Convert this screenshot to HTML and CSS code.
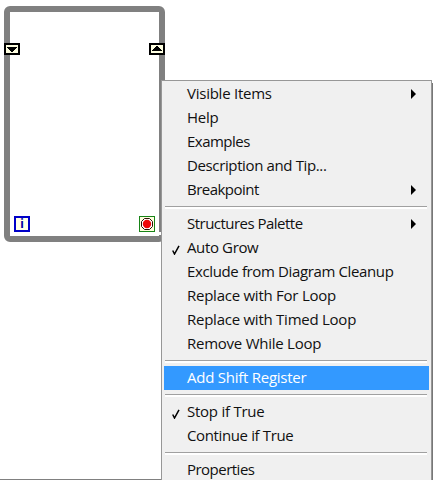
FILE: index.html
```html
<!DOCTYPE html>
<html lang="en">
<head>
  <meta charset="UTF-8" />
  <meta name="viewport" content="width=device-width, initial-scale=1.0"/>
  <title>While Loop</title>
  <link rel="stylesheet" href="styles.css">
</head>
<body>
  <div class="diagram">
    <div class="loop">
      <div class="registers">
        <svg class="register" width="16" height="12" viewBox="0 0 16 12" shape-rendering="crispEdges">
          <rect x="1" y="1" width="14" height="10" fill="#ffffe1" stroke="#000" stroke-width="2"/>
          <path d="M3 4h10v1h-1v1h-1v1h-1v1H9v1H7V8H6V7H5V6H4V5H3z" fill="#000"/>
        </svg>
        <svg class="register" width="16" height="12" viewBox="0 0 16 12" shape-rendering="crispEdges">
          <rect x="1" y="1" width="14" height="10" fill="#ffffe1" stroke="#000" stroke-width="2"/>
          <path d="M3 8h10V7h-1V6h-1V5h-1V4H9V3H7v1H6v1H5v1H4v1H3z" fill="#000"/>
        </svg>
      </div>
      <div class="terminals">
        <div class="iteration">i</div>
        <svg class="stop" width="16" height="16" viewBox="0 0 16 16">
          <rect x=".5" y=".5" width="15" height="15" fill="#ffffdf" stroke="#178417"/>
          <path d="M5.5 2.5h5l3 3v5l-3 3h-5l-3-3v-5z" fill="#fff" stroke="#301008"/>
          <circle cx="8" cy="8" r="4.2" fill="#f00808"/>
        </svg>
      </div>
    </div>
  </div>
  <div class="pointer"></div>

  <ul class="menu">
    <li class="item wide"><span>Visible Items</span><svg class="arrow" width="5" height="10" viewBox="0 0 5 10"><path d="M0 0l5 5-5 5z"/></svg></li>
    <li class="item wide"><span>Help</span></li>
    <li class="item tight"><span>Examples</span></li>
    <li class="item"><span>Description and Tip...</span></li>
    <li class="item tight"><span>Breakpoint</span><svg class="arrow" width="5" height="10" viewBox="0 0 5 10"><path d="M0 0l5 5-5 5z"/></svg></li>
    <li class="separator"></li>
    <li class="item tight"><span>Structures Palette</span><svg class="arrow" width="5" height="10" viewBox="0 0 5 10"><path d="M0 0l5 5-5 5z"/></svg></li>
    <li class="item"><svg class="check" width="8" height="10" viewBox="0 0 8 10"><path d="M.7 5.5L2.5 9 7 .8"/></svg><span>Auto Grow</span></li>
    <li class="item"><span>Exclude from Diagram Cleanup</span></li>
    <li class="item wide"><span>Replace with For Loop</span></li>
    <li class="item wide"><span>Replace with Timed Loop</span></li>
    <li class="item wide"><span>Remove While Loop</span></li>
    <li class="separator"></li>
    <li class="item wide selected"><span>Add Shift Register</span></li>
    <li class="separator"></li>
    <li class="item wide"><svg class="check" width="8" height="10" viewBox="0 0 8 10"><path d="M.7 5.5L2.5 9 7 .8"/></svg><span>Stop if True</span></li>
    <li class="item"><span>Continue if True</span></li>
    <li class="separator"></li>
    <li class="item tight"><span>Properties</span></li>
  </ul>
</body>
</html>
```
FILE: styles.css
```css
* {
  box-sizing: border-box;
}
body {
  margin: 0;
  height: 480px;
  overflow: hidden;
  position: relative;
  background: #fff;
  font-family: "Open Sans", "Noto Sans", sans-serif;
}
.diagram {
  height: 480px;
  padding: 6px 0 0 4px;
  border-bottom: 1px solid #808080;
}
.loop {
  width: 161px;
  height: 236px;
  border: 6px solid #808080;
  border-radius: 6px;
  display: flex;
  flex-direction: column;
  justify-content: space-between;
}
.registers {
  display: flex;
  justify-content: space-between;
  margin: 31px -6px 0;
}
.terminals {
  display: flex;
  justify-content: space-between;
  padding: 0 4px 4px;
}
.iteration {
  width: 16px;
  height: 16px;
  border: 2px solid #0000c8;
  background: #ffffe8;
  color: #0000a0;
  font: bold 12px/12px "Noto Sans", sans-serif;
  text-align: center;
}
/* tip of the mouse pointer */
.pointer {
  position: absolute;
  left: 157px;
  top: 232px;
  width: 4px;
  height: 3px;
  background: #fff;
}
/* context menu */
.menu {
  position: absolute;
  left: 161px;
  top: 80px;
  width: 271px;
  height: 410px;
  margin: 0;
  padding: 1px 2px;
  list-style: none;
  background: #f0f0f0;
  border: 1px solid #979797;
  box-shadow: 1px 3px 0 #777;
}
.item {
  display: flex;
  align-items: center;
  height: 24px;
  padding: 0 13px 0 23px;
  font-size: 15px;
  line-height: 22px;
  letter-spacing: -0.37px;
  color: #111;
  white-space: nowrap;
}
.item span {
  padding-bottom: 2px;
}
.tight {
  letter-spacing: -0.52px;
}
.wide {
  letter-spacing: -0.25px;
}
.selected {
  background: #3399ff;
  color: #fff;
}
.arrow {
  margin-left: auto;
  fill: #000;
}
.check {
  margin: 4px 7px 0 -15px;
  fill: none;
  stroke: #000;
  stroke-width: 1.5;
}
.separator {
  height: 10px;
  padding: 4px 2px 0 1px;
}
.separator::before {
  content: "";
  display: block;
  height: 2px;
  background: #fff;
  border-top: 1px solid #a0a0a0;
}
```
